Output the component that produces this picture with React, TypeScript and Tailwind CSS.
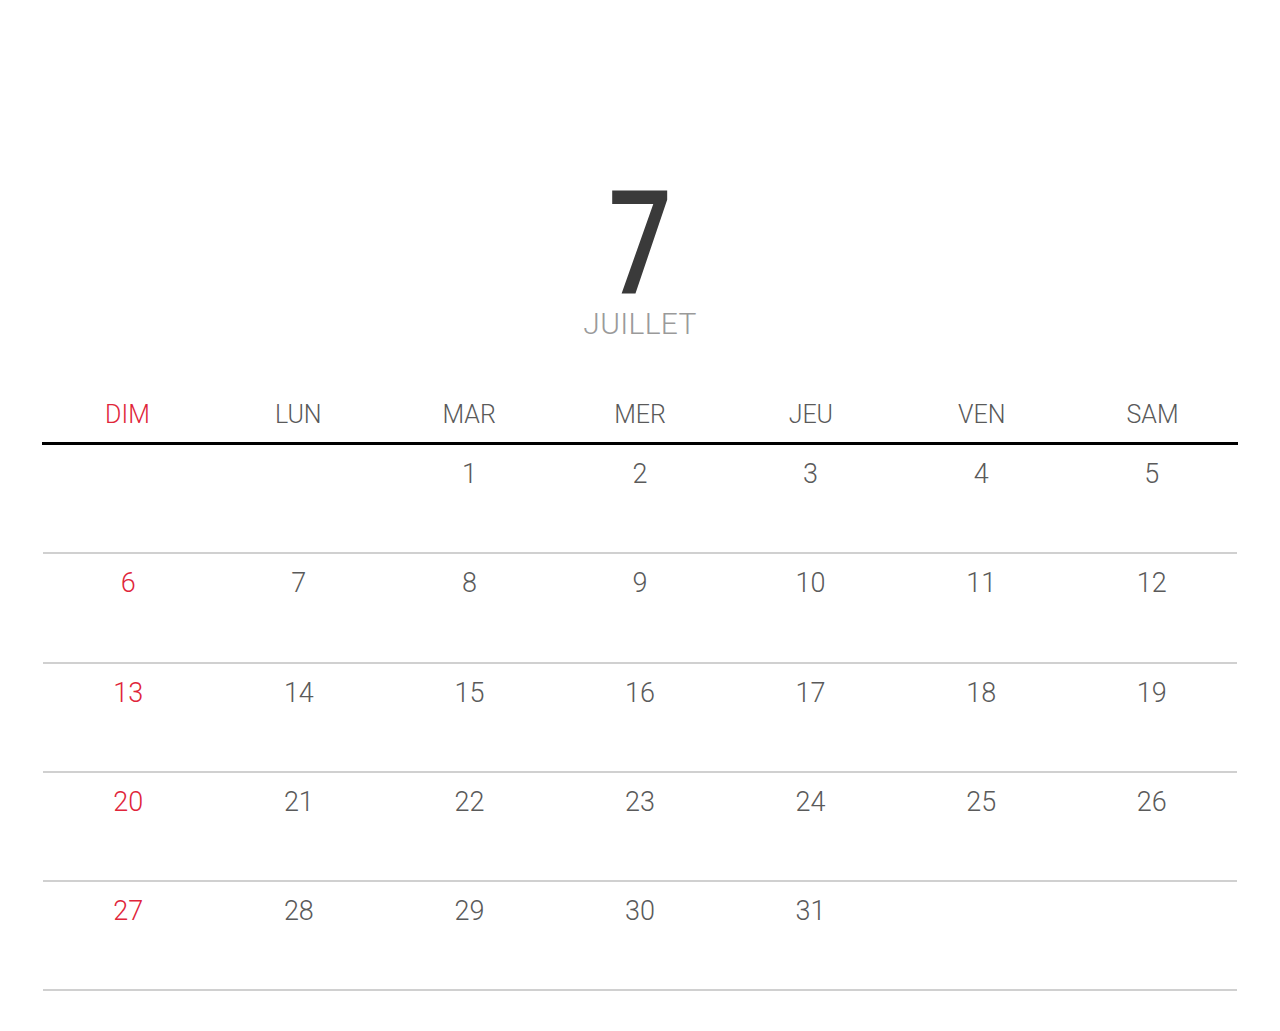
const days = ["DIM", "LUN", "MAR", "MER", "JEU", "VEN", "SAM"];

const weeks: (number | null)[][] = [
  [null, null, 1, 2, 3, 4, 5],
  [6, 7, 8, 9, 10, 11, 12],
  [13, 14, 15, 16, 17, 18, 19],
  [20, 21, 22, 23, 24, 25, 26],
  [27, 28, 29, 30, 31, null, null],
];

export default function App() {
  return (
    <div className="min-h-[1031px] w-full bg-white font-['Roboto','Liberation_Sans',sans-serif]">
      <div className="flex flex-col items-center pt-[178px]">
        <div className="scale-x-[0.77] text-[145px] leading-[131px] font-medium text-[#3a3a3a]">7</div>
        <div className="text-[30px] leading-none font-light tracking-[0.3px] text-[#9a9a9a]">
          JUILLET
        </div>
      </div>

      <div className="px-[42px] pt-[63px]">
        <div className="grid grid-cols-7 border-b-[3px] border-black pb-[15px]">
          {days.map((d, i) => (
            <div
              key={d}
              className={`text-center text-[25px] leading-none font-light ${
                i === 0 ? "text-[#e0253a]" : "text-[#5a5a5a]"
              }`}
            >
              {d}
            </div>
          ))}
        </div>

        {weeks.map((w, wi) => (
          <div key={wi} className="grid grid-cols-7 border-b-2 border-[#d0d0d0] mx-px">
            {w.map((n, i) => (
              <div
                key={i}
                className={`h-[107.3px] pt-[16px] text-center text-[27px] leading-none font-light ${
                  i === 0 ? "text-[#e0253a]" : "text-[#5a5a5a]"
                }`}
              >
                {n ?? ""}
              </div>
            ))}
          </div>
        ))}
      </div>
    </div>
  );
}
